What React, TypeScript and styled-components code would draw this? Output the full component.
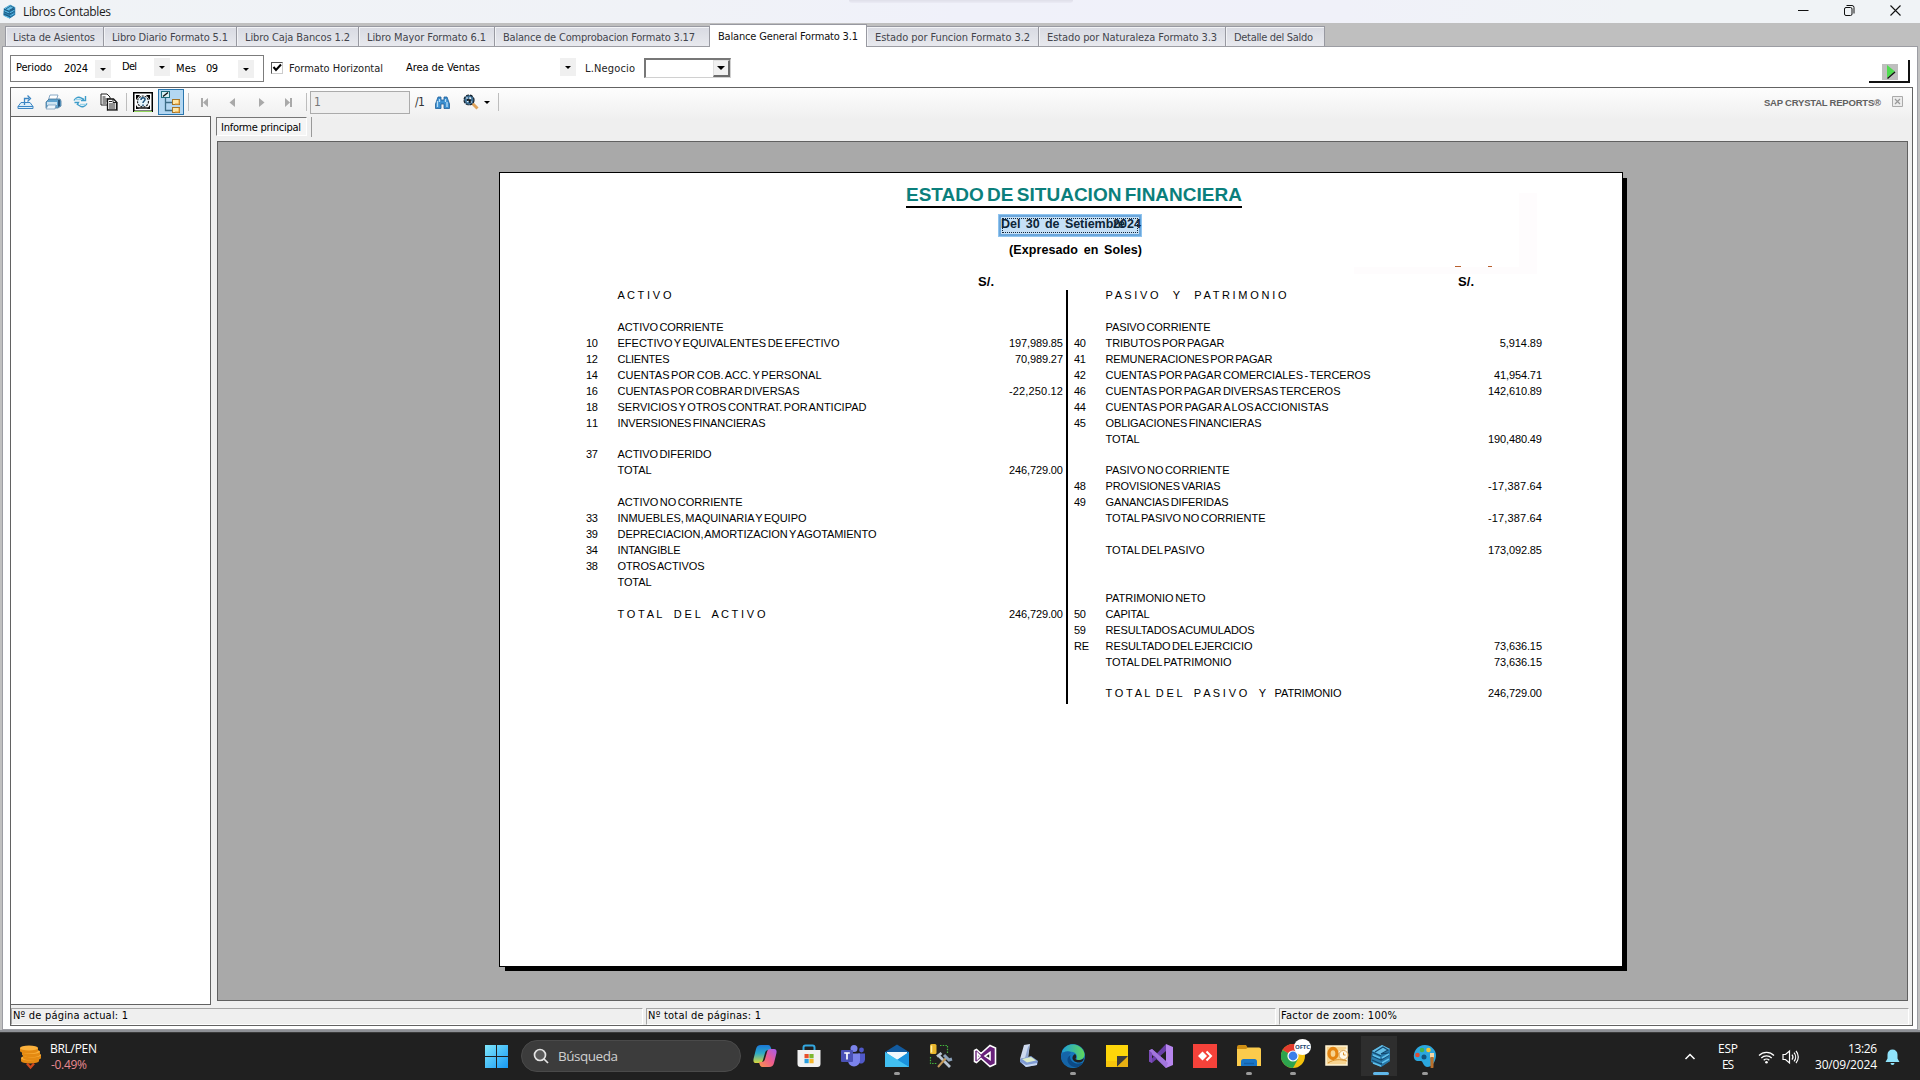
import React, { useLayoutEffect, useRef } from 'react';
import styled, { createGlobalStyle, css } from 'styled-components';

const Global = createGlobalStyle`
  * { box-sizing: border-box; }
  html, body { margin: 0; padding: 0; overflow: hidden; background: #c0c0c0; }
  svg { display: block; flex: none; }
`;

const tahoma = `Tahoma, "DejaVu Sans Condensed", "DejaVu Sans", sans-serif`;
const segoe = `"Segoe UI", "Open Sans", "Noto Sans", sans-serif`;
const arial = `Arial, "Liberation Sans", sans-serif`;

/* ---------- text ---------- */

const TextBox = styled.span<{ $l?: number; $t?: number; $size?: number; $color?: string; $bold?: boolean; $font?: string; $lh?: number; $ws?: number }>`
  display: block;
  flex: none;
  white-space: pre;
  line-height: ${p => p.$lh ?? 16}px;
  margin-left: ${p => p.$l ?? 0}px;
  margin-top: ${p => p.$t ?? 0}px;
  word-spacing: ${p => p.$ws ?? 0}px;
  ${p => p.$size && css`font-size: ${p.$size}px;`}
  ${p => p.$color && css`color: ${p.$color};`}
  ${p => p.$font && css`font-family: ${p.$font};`}
  font-weight: ${p => (p.$bold ? 700 : 400)};
`;
const Run = styled.span`
  display: inline-block;
  white-space: pre;
`;

type TProps = { w?: number; l?: number; t?: number; size?: number; color?: string; bold?: boolean; font?: string; lh?: number; ws?: number; children: string };

/* Tracks a line of text out or in until it is `w` pixels wide. */
function T({ w, l, t, size, color, bold, font, lh, ws, children }: TProps) {
  const box = useRef<HTMLSpanElement>(null);
  const run = useRef<HTMLSpanElement>(null);
  useLayoutEffect(() => {
    if (!w || !box.current || !run.current) return;
    run.current.style.letterSpacing = '0px';
    const natural = run.current.getBoundingClientRect().width;
    run.current.style.letterSpacing = `${(w - natural) / Math.max(1, children.length - 1)}px`;
    box.current.style.width = `${w}px`;
  }, [w, children]);
  return (
    <TextBox ref={box} $l={l} $t={t} $size={size} $color={color} $bold={bold} $font={font} $lh={lh} $ws={ws}>
      <Run ref={run}>{children}</Run>
    </TextBox>
  );
}

/* ---------- window ---------- */

const Screen = styled.div`
  width: 1920px;
  height: 1080px;
  display: flex;
  flex-direction: column;
  background: #c0c0c0;
  color: #000;
  font-family: ${tahoma};
  font-stretch: condensed;
  font-size: 11px;
`;
const TitleBar = styled.header`
  height: 23px;
  flex: none;
  display: flex;
  align-items: flex-start;
  background: linear-gradient(90deg, #f0f3f6 0, #f0f2f7 35%, #f0f1fa 50%, #f0f1f9 70%, #f0f3f6 85%);
  padding-left: 2px;
  font-family: ${segoe};
  font-stretch: normal;
  font-size: 12px;
`;
const AppMark = styled.div`
  width: 15px;
  padding-top: 4px;
`;
const SnapHandle = styled.div`
  width: 224px;
  height: 3px;
  margin-left: 738px;
  border-radius: 0 0 6px 6px;
  background: linear-gradient(#dfdfe9, #ebebf5);
`;
const WindowButtons = styled.div`
  margin-left: auto;
  margin-right: 19px;
  padding-top: 5px;
  display: flex;
  gap: 35px;
`;
const TabStrip = styled.nav`
  height: 23px;
  flex: none;
  display: flex;
  align-items: flex-end;
  padding-left: 5px;
  background: #bfbfbf;
`;
const Tab = styled.div<{ $w: number; $active?: boolean }>`
  width: ${p => p.$w}px;
  height: 20px;
  border: 1px solid #9899a1;
  border-width: 1px 1px 0 0;
  box-shadow: inset 1px 1px 0 #f2f3f6;
  background: linear-gradient(#d8dae2, #e8e9ee);
  color: #44454d;
  display: flex;
  &:first-child { border-left-width: 1px; }
  ${p => p.$active && css`
    height: 23px;
    margin-bottom: -1px;
    background: #fff;
    color: #111;
    box-shadow: none;
    z-index: 1;
  `}
`;
const Body = styled.main`
  height: 984px;
  flex: none;
  margin: 0 2px;
  border: 1px solid #9c9da3;
  background: #fff;
  display: flex;
  flex-direction: column;
`;
const BottomEdge = styled.div`
  height: 2px;
  flex: none;
  background: #8e9095;
`;

/* ---------- filters ---------- */

const FilterRow = styled.div`
  height: 40px;
  flex: none;
  display: flex;
  align-items: flex-start;
`;
const Group = styled.div`
  width: 254px;
  height: 27px;
  margin: 8px 0 0 7px;
  border: 1px solid #7c7c7c;
  display: flex;
`;
const DropButton = styled.div<{ $l: number; $t: number }>`
  width: 16px;
  height: 18px;
  flex: none;
  margin: ${p => p.$t}px 0 0 ${p => p.$l}px;
  background: #f0f0f0;
  display: flex;
  align-items: center;
  justify-content: center;
`;
const Caret = styled.span<{ $s?: number; $l?: number }>`
  width: 0;
  height: 0;
  margin-left: ${p => p.$l ?? 0}px;
  border: ${p => p.$s ?? 3}px solid transparent;
  border-top-color: #000;
  border-bottom: 0;
`;
const CheckBox = styled.div`
  width: 12px;
  height: 12px;
  margin: 15px 0 0 7px;
  border: 1px solid #555;
  border-right-color: #ccc;
  border-bottom-color: #ccc;
  background: #fff;
`;
const Combo = styled.div`
  width: 87px;
  height: 20px;
  margin: 11px 0 0 9px;
  border: 1px solid #d0d0d0;
  border-top: 2px solid #777;
  border-left: 2px solid #777;
  display: flex;
  justify-content: flex-end;
`;
const ComboButton = styled.div`
  width: 17px;
  height: 17px;
  background: #f0f0f0;
  border: 1px solid #e0e0e0;
  border-right: 2px solid #6b6b6b;
  border-bottom: 2px solid #6b6b6b;
  display: flex;
  align-items: center;
  justify-content: center;
`;
const RunButton = styled.div`
  width: 41px;
  height: 23px;
  margin: 13px 7px 0 auto;
  border: 0 solid #111;
  border-width: 0 2px 2px 0;
  padding: 4px 0 0 13px;
`;

/* ---------- report viewer ---------- */

const Viewer = styled.section`
  width: 1903px;
  height: 939px;
  margin-left: 7px;
  flex: none;
  border: 1px solid #626262;
  background: linear-gradient(#fdfdfd, #efefef 32px);
  display: flex;
  flex-direction: column;
`;
const Toolbar = styled.div`
  height: 28px;
  flex: none;
  display: flex;
  align-items: center;
`;
const Slot = styled.div<{ $l: number }>`
  margin-left: ${p => p.$l}px;
  flex: none;
`;
const Sep = styled.i<{ $l: number }>`
  width: 1px;
  height: 18px;
  margin-left: ${p => p.$l}px;
  background: #bdbdbd;
`;
const Pressed = styled.div`
  width: 26px;
  height: 26px;
  margin-left: 5px;
  border: 1px solid #2a76ae;
  background: #b3d7f2;
  padding: 1px 0 0 2px;
`;
const PageField = styled.div`
  width: 100px;
  height: 23px;
  margin-left: 3px;
  border: 1px solid #ababab;
  background: #efefef;
  display: flex;
`;
const Brand = styled.div`
  margin-left: auto;
  margin-right: 9px;
  padding-top: 1px;
  display: flex;
  align-items: flex-start;
`;
const Middle = styled.div`
  height: 889px;
  flex: none;
  display: flex;
`;
const GroupTree = styled.aside`
  width: 200px;
  border: 1px solid #626262;
  border-left-width: 0;
  background: #fff;
`;
const Stage = styled.div`
  flex: 1;
  display: flex;
  flex-direction: column;
  padding: 0 4px 0 5px;
`;
const PageTabs = styled.div`
  height: 25px;
  flex: none;
  display: flex;
  align-items: flex-start;
  padding-top: 1px;
`;
const PageTab = styled.div`
  width: 91px;
  height: 19px;
  border: 1px solid #777;
  border-right-color: #fff;
  border-bottom-color: #fff;
  background: #f5f5f5;
  display: flex;
`;
const TabEdge = styled.i`
  width: 1px;
  height: 20px;
  margin-left: 4px;
  background: #999;
`;
const Canvas = styled.div`
  width: 1691px;
  height: 860px;
  margin-left: 1px;
  border: 1px solid #606060;
  background: #a9a9a9;
  padding: 30px 0 0 281px;
`;
const Page = styled.article`
  position: relative;
  width: 1124px;
  height: 795px;
  border: 1px solid #000;
  box-shadow: 5px 5px 0 -1px #000;
  background: #fff;
  font-family: ${arial};
  font-size: 11px;
`;
const Heading = styled.h1`
  margin: 0 0 0 406px;
  padding-top: 11px;
  width: 336px;
  height: 35px;
  border-bottom: 2px solid #000;
`;
const Period = styled.div`
  width: 144px;
  height: 23px;
  margin: 6px 0 0 498px;
  border: 1px solid #8fc4ef;
  background: #6ba7dc;
  padding: 2px;
  position: relative;
`;
const PeriodInner = styled.div`
  height: 17px;
  background: #c6e0f6;
  outline: 1px dotted #10243a;
  outline-offset: -2px;
  display: flex;
`;
const Year = styled.div`
  position: absolute;
  left: 114px;
  top: 0;
`;
const Units = styled.div`
  height: 25px;
  padding-left: 509px;
`;
const Currency = styled.div`
  height: 25px;
  display: flex;
  align-items: flex-start;
  padding: 12px 0 0 478px;
`;
const LogoRest = styled.div`
  position: absolute;
  left: 854px;
  top: 20px;
  width: 183px;
  height: 81px;
  border: 0 solid #fefcfd;
  border-width: 0 18px 7px 0;
`;
const LogoTick = styled.i<{ $x: number; $w: number }>`
  position: absolute;
  left: ${p => p.$x}px;
  top: 73px;
  width: ${p => p.$w}px;
  height: 1px;
  background: #b8602e;
`;
const Ledger = styled.div`
  display: flex;
  align-items: flex-start;
`;
const Column = styled.div<{ $w: number; $pad: number }>`
  width: ${p => p.$w}px;
  padding-left: ${p => p.$pad}px;
`;
const Divider = styled.div`
  width: 2px;
  height: 414px;
  margin: 3px 0 0 3px;
  background: #000;
`;
const Line = styled.div<{ $h?: number }>`
  height: ${p => p.$h ?? 16}px;
  display: grid;
  grid-template-columns: 31px 1fr auto;
`;
const StatusBar = styled.footer`
  height: 17px;
  margin-top: 3px;
  display: grid;
  grid-template-columns: 632px 630px 630px;
  column-gap: 3px;
`;
const StatusCell = styled.div`
  border: 1px solid #a5a5a5;
  border-right-color: #fff;
  border-bottom-color: #fff;
  display: flex;
  padding-left: 1px;
`;

/* ---------- taskbar ---------- */

const Taskbar = styled.footer`
  height: 48px;
  flex: none;
  background: #202020;
  border-top: 1px solid #3a3a3a;
  display: flex;
  color: #fff;
  font-family: ${segoe};
  font-stretch: normal;
  font-size: 12px;
`;
const Rates = styled.div`
  width: 485px;
  padding: 11px 0 0 19px;
  display: flex;
`;
const Stack = styled.div<{ $align?: string }>`
  display: flex;
  flex-direction: column;
  align-items: ${p => p.$align ?? 'flex-start'};
`;
const StartMark = styled.div`
  width: 24px;
  padding-top: 12px;
`;
const Search = styled.div`
  width: 220px;
  height: 32px;
  margin: 7px 2px 0 12px;
  border-radius: 16px;
  border: 1px solid #4a4a4a;
  background: #3c3c3c;
  display: flex;
  align-items: center;
  padding-left: 11px;
`;
const AppCell = styled.div<{ $active?: boolean }>`
  width: 44px;
  height: 47px;
  padding-top: 11px;
  display: flex;
  flex-direction: column;
  align-items: center;
  ${p => p.$active && css`
    background: linear-gradient(#2e2e2e, #2e2e2e) 2px 3px / 36px 40px no-repeat;
  `}
`;
const Dot = styled.i<{ $active?: boolean }>`
  width: ${p => (p.$active ? 16 : 6)}px;
  height: 3px;
  margin-top: 4px;
  border-radius: 2px;
  background: ${p => (p.$active ? '#60b8ea' : '#9a9a9a')};
`;
const Tray = styled.div`
  margin-left: auto;
  padding: 8px 20px 0 0;
  display: flex;
`;

/* ---------- drawings ---------- */

const Cube = ({ s }: { s: number }) => (
  <svg width={s} height={s} viewBox="0 0 24 24">
    <path d="M3 7 13 1l8 4v12l-9 6-10-5z" fill="#2d7fae" />
    <path d="M3 7 13 1l8 4-9 6z" fill="#63bde6" />
    <path d="m12 11 9-6v12l-9 6z" fill="#2778aa" />
    <path d="M6 8l8-5 5 3-7 4 8-1M3 12l9 4 8-5M3 16l9 4 8-5M3 8l9 4" fill="none" stroke="#14496f" strokeWidth="1.200" />
    <path d="m13 14 7-4M4 11l7 3M4 19l8 3M13 19l7-4" stroke="#5fc2ee" strokeWidth="1.600" />
  </svg>
);

const Coins = () => (
  <svg width="24" height="26" viewBox="0 0 24 26">
    {[[11, 14], [13, 11], [12, 7.6], [10, 4]].map(([x, y]) => (
      <g key={y}>
        <path d={`M${x - 9} ${y}v3a9 2.6 0 0 0 18 0v-3z`} fill="#e48a12" />
        <ellipse cx={x} cy={y} rx="9" ry="2.4" fill="#fbb13c" />
      </g>
    ))}
    <path d="M8 19.5l3.5 4 3.5-4" fill="none" stroke="#d04a1c" strokeWidth="2.4" />
  </svg>
);

const Nav = ({ d }: { d: string }) => (
  <svg width="8" height="11" viewBox="0 0 8 11"><path d={d} fill="#a9a9a9" /></svg>
);

const ExportIcon = () => (
  <svg width="17" height="16" viewBox="0 0 17 16" fill="none" stroke="#3c86c4">
    <path d="M4 8.500h9l3 4H1zM1 12.500h15v2H1z" fill="#dceefa" />
    <path d="M7.500 11V4.500h4.500M10.500 1.500l3 3-3 3" strokeWidth="1.300" />
  </svg>
);
const PrintIcon = () => (
  <svg width="17" height="16" viewBox="0 0 17 16">
    <path d="M5 1h8l-2 6H3z" fill="#fff" stroke="#88a9c6" />
    <path d="M1 8l3-3h11l1 2v5l-3 2H1z" fill="#5fa3cf" stroke="#4a7799" strokeWidth=".8" />
    <path d="M2 8h10v3H2z" fill="#cfe4f2" />
    <path d="M3 11h8l-1 4H1z" fill="#eef6fc" stroke="#6c94b4" strokeWidth=".7" />
    <path d="M13 6h2v6l-2 1z" fill="#27557c" />
  </svg>
);
const RefreshIcon = () => (
  <svg width="15" height="14" viewBox="0 0 15 14" fill="none" stroke="#3d9cc9" strokeWidth="1.400">
    <path d="M1 5.500C3 2 6 1.500 8 3l3 1.500M12.500 1v4.500H8M1.500 7.500h4L4 10M14 8.500c-2 3.500-5 4-7 2.500L4.500 9.500" />
    <path d="M2 4.500h6M7 9.500h6" stroke="#9cd4ea" />
  </svg>
);
const CopyIcon = () => (
  <svg width="18" height="18" viewBox="0 0 18 18">
    <path d="M1 1h6l3 3v8H1z" fill="#fff" stroke="#222" />
    <path d="M2.500 4h3M2.500 6h6M2.500 8h6M2.500 10h4" stroke="#222" />
    <path d="M7.500 6h6l3 3v8h-9z" fill="#fff" stroke="#111" strokeWidth="1.300" />
    <path d="M9 8.500h3M9 11h6M9 13h6M9 15h6M13 6v3.500h3.500" stroke="#222" fill="none" />
    <path d="M17.500 9v8.500H8" stroke="#666" fill="none" />
  </svg>
);
const ParamIcon = () => (
  <svg width="20" height="20" viewBox="0 0 20 20">
    <rect x=".75" y=".75" width="18.500" height="18.500" fill="#fff" stroke="#000" strokeWidth="1.500" />
    <path d="M3 3h4L3 8zM17 3h-4l4 5zM3 17v-4l3 4zM17 17v-4l-3 4z" fill="#000" />
    <circle cx="10" cy="9.500" r="5.500" fill="#e6f4fa" stroke="#222" strokeWidth="1.200" strokeDasharray="2 1" />
    <path d="M8 8c0-3 4-3 4-.500C12 9 10 9 10 11M10 12.500v1.500" fill="none" stroke="#1c4f78" strokeWidth="1.500" />
    <path d="M4 16h12" stroke="#111" strokeWidth="1.500" />
    <path d="M1 19.500h18" stroke="#8fd35a" />
  </svg>
);
const TreeIcon = () => (
  <svg width="20" height="22" viewBox="0 0 20 22">
    <path d="M4.500 6v13.500h7M4.500 11.500h7" fill="none" stroke="#3b6c86" strokeWidth="1.300" />
    <rect x=".5" y=".5" width="8" height="6" fill="#d9f1f4" stroke="#1d6c7c" />
    <path d="M2 5.500 7 1.500" stroke="#111" strokeWidth="1.500" />
    <rect x="11.500" y="8.500" width="7" height="5" fill="#ffe7a6" stroke="#a5762a" />
    <rect x="11.500" y="16.500" width="7" height="5" fill="#ffe7a6" stroke="#a5762a" />
    <path d="M14 13h4v-4M14 21h4v-4" stroke="#e39a34" fill="none" />
  </svg>
);
const Binoculars = () => (
  <svg width="15" height="13" viewBox="0 0 15 13">
    <path d="M3 1h3v3h3V1h3l2.500 7v4.500H9V8H6v4.500H.5V8z" fill="#3b8fd0" stroke="#1e5e98" strokeWidth=".8" />
    <path d="M2.500 5v6M4.500 3v3M10.500 3v3M12 6v5" stroke="#b7def7" strokeWidth="1.300" />
  </svg>
);
const ZoomIcon = () => (
  <svg width="16" height="16" viewBox="0 0 16 16">
    <path d="M9.500 9.500 14.500 14.500" stroke="#e0a45c" strokeWidth="3" />
    <circle cx="6" cy="6" r="5" fill="#3f6f94" stroke="#15202b" strokeWidth="1.200" strokeDasharray="3 1" />
    <path d="M3 4h2M7 3v3M4 8l4-4M7 8h2" stroke="#e8f6ff" strokeWidth="1.100" />
    <path d="M4 6h3v3" stroke="#000" fill="none" strokeWidth="1.300" />
  </svg>
);

const appIcons: Record<string, React.ReactNode> = {
  copilot: (
    <>
      <path d="M8 1h7c2 0 2.500 1.500 3 3l.5 2h-3c-2 0-3 1-3.500 3l-2 7c-.5 2-1.500 3-3.500 3H3c-3 0-3-3-2-6l2-8c.7-2.500 2-4 5-4z" fill="url(#copA)" />
      <path d="M16 23H9.500C7.500 23 7 21.500 6.500 20L6 18h2.500c2 0 3-1 3.500-3l2-7c.5-2 1.500-3 3.500-3H21c3 0 3 3 2 6l-2 8c-.7 2.500-2 4-5 4z" fill="url(#copB)" />
    </>
  ),
  store: (
    <>
      <path d="M6.500 8V3.500a2 2 0 0 1 2-2h7a2 2 0 0 1 2 2V8" fill="none" stroke="#33a7e0" strokeWidth="2" />
      <path d="M.5 6h23v14a3 3 0 0 1-3 3h-17a3 3 0 0 1-3-3z" fill="#f1f1f1" />
      <path d="M7.500 10h4.200v4.200H7.500z" fill="#e8502c" /><path d="M12.400 10h4.200v4.200h-4.200z" fill="#7db72f" />
      <path d="M7.500 15h4.200v4.200H7.500z" fill="#2a9fe0" /><path d="M12.400 15h4.200v4.200h-4.200z" fill="#f5b62a" />
    </>
  ),
  teams: (
    <>
      <circle cx="13" cy="4.500" r="3.500" fill="#7b83eb" /><circle cx="20.500" cy="6" r="2.400" fill="#5059c9" />
      <path d="M17 9.500h7v6a4 4 0 0 1-6 3.500z" fill="#5059c9" />
      <path d="M7 9.500h12v7a6 6 0 0 1-12 0z" fill="#7b83eb" />
      <rect x="0" y="6" width="12" height="12" rx="1" fill="#4a51b5" />
      <path d="M3.200 9h5.600M6 9v6.500" stroke="#fff" strokeWidth="1.700" />
    </>
  ),
  mail: (
    <>
      <path d="M0 8 12 .5 24 8v3H0z" fill="#125a9e" /><path d="M2 8h20v9H2z" fill="#f2f8fc" />
      <path d="M0 8l12 8 12-8v15H0z" fill="#2fb3ee" /><path d="M24 8v15L12 16z" fill="#1a91dd" /><path d="M0 8l24 15H0z" fill="#42c0f2" />
    </>
  ),
  sql: (
    <>
      <rect x="1" y="0" width="6.500" height="10" rx="1.500" fill="#e8b52c" /><path d="M2.500 1.500v7" stroke="#fff0a8" strokeWidth="1.500" />
      <path d="M11 1.500h7.500V9M1.500 13v6.500H8" stroke="#43b63c" strokeDasharray="1.500 1.200" fill="none" strokeWidth="1.200" />
      <path d="m10 12 11 11M8 12.500 12.500 9" stroke="#b9c6d4" strokeWidth="2.800" />
      <path d="m9 23 8-9" stroke="#c49a5c" strokeWidth="2" /><path d="m15 11 5 5 3-1" stroke="#8aa0b8" strokeWidth="3" fill="none" />
    </>
  ),
  vsOld: (
    <path d="M17 1.500 22.500 4v16L17 22.500 8 14.500 3.500 18.500 1.500 17.500v-11l2-1L8 9.500zM17 8.500 12 12l5 3.500zM4.500 9.500v5L7 12z" fill="#68217a" stroke="#fff" strokeWidth="1.600" fillRule="evenodd" />
  ),
  scanner: (
    <>
      <path d="M7 1 13 0 11 14 3 15z" fill="#cdd9ee" /><path d="M11 3 12.500 1 11 13 8 14z" fill="#8fa6d0" />
      <path d="m3 15 11-3 7 5-1 4-11 2-6-5z" fill="#7f9bd4" /><path d="m5 15 9-2 5 3.500-9 2z" fill="#dcebc9" /><path d="m4 18 5 3 11-2v2l-11 2z" fill="#c7d6f0" />
    </>
  ),
  edge: (
    <>
      <circle cx="12" cy="12" r="12" fill="#1678bd" />
      <path d="M1 8C4-2 19-2 23 8c2 6-3 9-8 8 2-2 1-7-3-8C7 7 3 9 1 8z" fill="url(#edgeG)" />
      <path d="M9 10c-4 3-2 12 6 13C7 25 0 20 0 12c1-4 6-6 10-4z" fill="#1565a8" />
      <path d="M9.500 11c-2 5 4 11 12.500 7.500C19 24 13 25 8 20c-3-4-1-8 1.500-9z" fill="#0c4a86" />
      <path d="M14 10c2 2 1 4 .5 5 2 2 7 1 8.500-1-1 5-5 5-8 4-4-1-5-6-1-8z" fill="#202020" />
    </>
  ),
  sticky: (
    <>
      <path d="M1 1h22v11l-2 1-7 9H1z" fill="#fdd60a" /><path d="M1 17h12v6H1z" fill="#f8c60c" />
      <path d="M12 12h11L12 23z" fill="#3b3b3b" /><path d="M23 12v11H12z" fill="#e8b012" />
    </>
  ),
  vsNew: (
    <>
      <path d="m17 0 7 3v18l-7 3z" fill="#b785ee" /><path d="M0 6.500 3 5l14 12v7L2 10z" fill="#8b5cc9" />
      <path d="M0 17.500 17 0v7L3 19z" fill="#6a3fa8" /><path d="m0 6.500 17 17.500 2-5L3 5z" fill="#a276dd" />
      <path d="M0 6.500v11l3 1.500V9z" fill="#7c4cba" />
    </>
  ),
  anydesk: (
    <>
      <path d="M0 0h24v24H0z" fill="#f5423a" /><path d="m9.500 7.500 4.500 4.500-4.500 4.500L5 12z" fill="#fff" />
      <path d="m13.500 7.500 4.500 4.500-4.500 4.500" fill="none" stroke="#fff" strokeWidth="2" />
    </>
  ),
  folder: (
    <>
      <path d="M0 3a2 2 0 0 1 2-2h7l2 3h11v6H0z" fill="#cf8f14" /><path d="M0 5h9l2-1.500h11a2 2 0 0 1 2 2V22H0z" fill="#fbcb4c" />
      <path d="M4 22v-4.500A2.500 2.500 0 0 1 6.500 15h11a2.500 2.500 0 0 1 2.500 2.500V22z" fill="#1a76c6" /><path d="M7 19.500h10" stroke="#1560a8" strokeWidth="1.500" />
    </>
  ),
  chrome: (
    <>
      <circle cx="12" cy="12" r="12" fill="#f4c20d" />
      <path d="M12 12 1.600 6A12 12 0 0 1 22.400 6z" fill="#e33b2e" /><path d="M12 12 1.600 6A12 12 0 0 0 12 24l5-9z" fill="#2da44e" />
      <circle cx="12" cy="12" r="5.600" fill="#fff" /><circle cx="12" cy="12" r="4.400" fill="#3b7fe8" />
    </>
  ),
  outlook: (
    <>
      <path d="M1 2h21v19H1z" fill="#f7d491" stroke="#fff3d5" strokeWidth="1.500" />
      <path d="m12 8 10-3v11z" fill="#fff8e8" /><ellipse cx="8" cy="9.500" rx="4" ry="5" fill="none" stroke="#e38411" strokeWidth="3.300" />
      <circle cx="18.500" cy="11" r="4.500" fill="#fff7e7" stroke="#dda451" /><path d="M18.500 8.500V11h2M3 19c6-4 12-4 19-2" stroke="#d8912d" fill="none" />
    </>
  ),
  paint: (
    <>
      <path d="M12 1C4 1 0 8 1 14c1 4 5 3 7 3s2 5 6 6c6 0 9-7 9-12S18 1 12 1z" fill="#2ba7df" />
      <circle cx="9" cy="6" r="2.300" fill="#47b54a" /><circle cx="15.500" cy="6" r="2.300" fill="#f4c534" /><circle cx="4.500" cy="11" r="2.300" fill="#e04c32" /><circle cx="11" cy="13" r="2.500" fill="#10537f" />
      <path d="M17 9h4v5h-4z" fill="#f1d6a8" /><path d="M17.300 13h3.400L20.500 23a1.300 1.300 0 0 1-3 0z" fill="#b96f2c" />
    </>
  ),
};

const ChromeWrap = styled.div`
  position: relative;
`;
const Profile = styled.div`
  position: absolute;
  left: 13px;
  top: -5px;
  width: 17px;
  height: 16px;
  border-radius: 50%;
  background: #fff;
  color: #17456e;
  overflow: hidden;
  display: flex;
  justify-content: center;
`;

const apps: [string, boolean][] = [
  ['copilot', false], ['store', false], ['teams', false], ['mail', true], ['sql', false], ['vsOld', false], ['scanner', false],
  ['edge', true], ['sticky', false], ['vsNew', false], ['anydesk', false], ['folder', true], ['chrome', true], ['outlook', false],
];

const AppIcon = ({ name }: { name: string }) => (
  <svg width="24" height="24" viewBox="0 0 24 24">
    <defs>
      <linearGradient id="copA" x1="0" y1="0" x2="0" y2="1"><stop offset="0" stopColor="#1b77d8" /><stop offset=".45" stopColor="#2aa9c8" /><stop offset="1" stopColor="#d8d73a" /></linearGradient>
      <linearGradient id="copB" x1="1" y1="0" x2="0" y2="1"><stop offset="0" stopColor="#a45df0" /><stop offset=".5" stopColor="#ee5c8c" /><stop offset="1" stopColor="#f9964a" /></linearGradient>
      <linearGradient id="edgeG"><stop offset="0" stopColor="#1f9fd8" /><stop offset="1" stopColor="#5fd85a" /></linearGradient>
    </defs>
    {appIcons[name]}
  </svg>
);

/* ---------- data ---------- */

type Tabs = { text: string; w: number; pad: number; tw: number; active?: boolean };
const tabs: Tabs[] = [
  { text: 'Lista de Asientos', w: 99, pad: 7, tw: 82 },
  { text: 'Libro Diario Formato 5.1', w: 133, pad: 8, tw: 116 },
  { text: 'Libro Caja Bancos 1.2', w: 122, pad: 8, tw: 105 },
  { text: 'Libro Mayor Formato 6.1', w: 136, pad: 8, tw: 119 },
  { text: 'Balance de Comprobacion Formato 3.17', w: 215, pad: 8, tw: 192 },
  { text: 'Balance General Formato 3.1', w: 157, pad: 8, tw: 140, active: true },
  { text: 'Estado por Funcion Formato 3.2', w: 172, pad: 8, tw: 155 },
  { text: 'Estado por Naturaleza Formato 3.3', w: 187, pad: 8, tw: 170 },
  { text: 'Detalle del Saldo', w: 99, pad: 8, tw: 79 },
];

type Row = { code?: string; label?: string; w?: number; amount?: string; h?: number; spaced?: boolean };
const activo: Row[] = [
  { label: 'A C T I V O', w: 54, spaced: true },
  {},
  { label: 'ACTIVO CORRIENTE', w: 106 },
  { code: '10', label: 'EFECTIVO Y EQUIVALENTES DE EFECTIVO', w: 222, amount: '197,989.85' },
  { code: '12', label: 'CLIENTES', w: 52, amount: '70,989.27' },
  { code: '14', label: 'CUENTAS POR COB. ACC. Y PERSONAL', w: 204 },
  { code: '16', label: 'CUENTAS POR COBRAR DIVERSAS', w: 182, amount: '-22,250.12' },
  { code: '18', label: 'SERVICIOS Y OTROS CONTRAT. POR ANTICIPAD', w: 249 },
  { code: '11', label: 'INVERSIONES FINANCIERAS', w: 148 },
  { h: 15 },
  { code: '37', label: 'ACTIVO DIFERIDO', w: 94 },
  { label: 'TOTAL', w: 34, amount: '246,729.00' },
  {},
  { label: 'ACTIVO NO CORRIENTE', w: 125 },
  { code: '33', label: 'INMUEBLES, MAQUINARIA Y EQUIPO', w: 189 },
  { code: '39', label: 'DEPRECIACION, AMORTIZACION Y AGOTAMIENTO', w: 259 },
  { code: '34', label: 'INTANGIBLE', w: 63 },
  { code: '38', label: 'OTROS ACTIVOS', w: 87 },
  { label: 'TOTAL', w: 34 },
  {},
  { label: 'T O T A L    D E L    A C T I V O', w: 148, amount: '246,729.00', spaced: true },
];
const pasivo: Row[] = [
  { label: 'P A S I V O     Y     P A T R I M O N I O', w: 181, spaced: true },
  {},
  { label: 'PASIVO CORRIENTE', w: 105 },
  { code: '40', label: 'TRIBUTOS POR PAGAR', w: 119, amount: '5,914.89' },
  { code: '41', label: 'REMUNERACIONES POR PAGAR', w: 167 },
  { code: '42', label: 'CUENTAS POR PAGAR COMERCIALES - TERCEROS', w: 265, amount: '41,954.71' },
  { code: '46', label: 'CUENTAS POR PAGAR DIVERSAS TERCEROS', w: 235, amount: '142,610.89' },
  { code: '44', label: 'CUENTAS POR PAGAR A LOS ACCIONISTAS', w: 223 },
  { code: '45', label: 'OBLIGACIONES FINANCIERAS', w: 156 },
  { label: 'TOTAL', w: 34, amount: '190,480.49' },
  { h: 15 },
  { label: 'PASIVO NO CORRIENTE', w: 124 },
  { code: '48', label: 'PROVISIONES VARIAS', w: 115, amount: '-17,387.64' },
  { code: '49', label: 'GANANCIAS DIFERIDAS', w: 123 },
  { label: 'TOTAL PASIVO NO CORRIENTE', w: 160, amount: '-17,387.64' },
  {},
  { label: 'TOTAL DEL PASIVO', w: 99, amount: '173,092.85' },
  {},
  {},
  { label: 'PATRIMONIO NETO', w: 100 },
  { code: '50', label: 'CAPITAL', w: 44 },
  { code: '59', label: 'RESULTADOS ACUMULADOS', w: 149 },
  { code: 'RE', label: 'RESULTADO DEL EJERCICIO', w: 147, amount: '73,636.15' },
  { label: 'TOTAL DEL PATRIMONIO', w: 126, amount: '73,636.15' },
  { h: 15 },
  { label: 'T O T A L  D E L    P A S I V O    Y   PATRIMONIO', w: 236, amount: '246,729.00', spaced: true },
];

const Rows = ({ rows }: { rows: Row[] }) => (
  <>
    {rows.map((r, i) => (
      <Line key={i} $h={r.h}>
        <T w={r.code === 'RE' ? 15 : r.code ? 12 : undefined}>{r.code ?? ''}</T>
        <T w={r.w} l={0.5} ws={r.spaced ? 0 : -1.5}>{r.label ?? ''}</T>
        <T w={r.amount ? r.amount.length * 5.9 - 5 : undefined}>{r.amount ?? ''}</T>
      </Line>
    ))}
  </>
);

/* ---------- app ---------- */

export default function App() {
  return (
    <Screen>
      <Global />
      <TitleBar>
        <AppMark><Cube s={15} /></AppMark>
        <T l={6} t={4} w={88} size={12} color="#1b1b1b">Libros Contables</T>
        <SnapHandle />
        <WindowButtons>
          <svg width="11" height="11" viewBox="0 0 11 11"><path d="M0 5.500h10.500" stroke="#111" /></svg>
          <svg width="11" height="11" viewBox="0 0 11 11" fill="none" stroke="#111"><rect x=".5" y="2.500" width="7.500" height="8" rx="1.500" /><path d="M2.500.5h5.500a2 2 0 0 1 2 2v6" /></svg>
          <svg width="11" height="11" viewBox="0 0 11 11"><path d="M.5.500l10 10M10.500.500l-10 10" stroke="#111" strokeWidth="1.100" /></svg>
        </WindowButtons>
      </TitleBar>

      <TabStrip>
        {tabs.map(t => (
          <Tab key={t.text} $w={t.w} $active={t.active}>
            <T l={t.pad} t={t.active ? 4 : 3} w={t.tw}>{t.text}</T>
          </Tab>
        ))}
      </TabStrip>

      <Body>
        <FilterRow>
          <Group>
            <T l={5} t={4} w={36}>Periodo</T>
            <T l={12} t={5} w={24}>2024</T>
            <DropButton $l={7} $t={4}><Caret /></DropButton>
            <T l={11} t={3} w={15}>Del</T>
            <DropButton $l={17} $t={2}><Caret /></DropButton>
            <T l={6} t={5} w={20}>Mes</T>
            <T l={10} t={5} w={12}>09</T>
            <DropButton $l={20} $t={4}><Caret /></DropButton>
          </Group>
          <CheckBox>
            <svg width="10" height="10" viewBox="0 0 10 10"><path d="M1.500 4 4 7l5-5.500" fill="none" stroke="#000" strokeWidth="2" /></svg>
          </CheckBox>
          <T l={6} t={14} w={94} color="#222">Formato Horizontal</T>
          <T l={23} t={13} w={74}>Area de Ventas</T>
          <DropButton $l={80} $t={11}><Caret /></DropButton>
          <T l={9} t={14} w={50} color="#222">L.Negocio</T>
          <Combo><ComboButton><Caret $s={4} /></ComboButton></Combo>
          <RunButton>
            <svg width="16" height="16" viewBox="0 0 16 16">
              <path d="M0 0h16v16H0z" fill="#bfbfbf" />
              <path d="M5 1v13l8-6.500z" fill="#4fdc4f" />
              <path d="M5.500 14.500 13 8" stroke="#111" strokeWidth="1.300" />
            </svg>
          </RunButton>
        </FilterRow>

        <Viewer>
          <Toolbar>
            <Slot $l={6}><ExportIcon /></Slot>
            <Slot $l={11}><PrintIcon /></Slot>
            <Slot $l={11}><RefreshIcon /></Slot>
            <Slot $l={12}><CopyIcon /></Slot>
            <Sep $l={8} />
            <Slot $l={6}><ParamIcon /></Slot>
            <Pressed><TreeIcon /></Pressed>
            <Sep $l={4} />
            <Slot $l={12}><Nav d="M0 1h2v9H0zM7 1v9L2 5.500z" /></Slot>
            <Slot $l={19}><Nav d="M7 1v9L1.500 5.500z" /></Slot>
            <Slot $l={22}><Nav d="M1 1v9l5.500-4.500z" /></Slot>
            <Slot $l={19}><Nav d="M0 1v9l5-4.500zM5 1h2v9H5z" /></Slot>
            <Sep $l={13} />
            <PageField><T l={3} t={2} w={6} size={12} color="#777">1</T></PageField>
            <T l={5} w={10} size={12} color="#333">/1</T>
            <Slot $l={10}><Binoculars /></Slot>
            <Slot $l={13}><ZoomIcon /></Slot>
            <Caret $l={5} />
            <Sep $l={8} />
            <Brand>
              <T t={1} w={117} size={9.5} bold font={arial} color="#606060" lh={12}>SAP CRYSTAL REPORTS®</T>
              <Slot $l={11}>
                <svg width="11" height="11" viewBox="0 0 11 11"><path d="M.5.500h10v10H.5z" fill="#ececec" stroke="#aaa" /><path d="m3 3 5 5M8 3 3 8" stroke="#999" strokeWidth="1.200" /></svg>
              </Slot>
            </Brand>
          </Toolbar>

          <Middle>
            <GroupTree />
            <Stage>
              <PageTabs>
                <PageTab><T l={4} t={2} w={80}>Informe principal</T></PageTab>
                <TabEdge />
              </PageTabs>
              <Canvas>
                <Page>
                  <Heading><T w={336} size={19} bold color="#0b7f7c" lh={22} ws={-2}>ESTADO DE SITUACION FINANCIERA</T></Heading>
                  <Period>
                    <PeriodInner><T t={-1} w={124} size={12.5} bold color="#0d2437" lh={17} ws={2}>Del 30 de Setiembre</T></PeriodInner>
                    <Year><T t={1} w={28} size={12.5} bold color="#0d2437" lh={17}>2024</T></Year>
                  </Period>
                  <Units><T w={133} size={12.5} bold lh={26} ws={2}>(Expresado en Soles)</T></Units>
                  <Currency>
                    <T w={16} size={13} bold lh={15}>S/.</T>
                    <T l={464} w={16} size={13} bold lh={15}>S/.</T>
                  </Currency>
                  <LogoRest>
                    <LogoTick $x={101} $w={6} />
                    <LogoTick $x={134} $w={4} />
                  </LogoRest>
                  <Ledger>
                    <Column $w={563} $pad={86}><Rows rows={activo} /></Column>
                    <Divider />
                    <Column $w={474} $pad={6}><Rows rows={pasivo} /></Column>
                  </Ledger>
                </Page>
              </Canvas>
            </Stage>
          </Middle>

          <StatusBar>
            <StatusCell><T t={-1} w={115}>Nº de página actual: 1</T></StatusCell>
            <StatusCell><T t={-1} w={113}>Nº total de páginas: 1</T></StatusCell>
            <StatusCell><T t={-1} w={116}>Factor de zoom: 100%</T></StatusCell>
          </StatusBar>
        </Viewer>
      </Body>
      <BottomEdge />

      <Taskbar>
        <Rates>
          <Coins />
          <Stack>
            <T l={7} t={-3} w={47}>BRL/PEN</T>
            <T l={8} w={36} color="#e98a92">-0.49%</T>
          </Stack>
        </Rates>
        <StartMark>
          <svg width="24" height="24" viewBox="0 0 24 24">
            <defs><linearGradient id="win" gradientUnits="userSpaceOnUse" x1="0" y1="0" x2="24" y2="24"><stop stopColor="#7fe6fb" /><stop offset="1" stopColor="#1296f5" /></linearGradient></defs>
            <path d="M0 0h11v11H0zM12 0h11v11H12zM0 12h11v11H0zM12 12h11v11H12z" fill="url(#win)" />
          </svg>
        </StartMark>
        <Search>
          <svg width="16" height="16" viewBox="0 0 16 16" fill="none" stroke="#e4e4e4" strokeWidth="1.700"><circle cx="7" cy="7" r="5.500" fill="#5a5a5a" /><path d="m11 11 4 4" /></svg>
          <T l={9} t={-1} w={60} size={13.5} color="#cfcfcf" lh={20}>Búsqueda</T>
        </Search>
        {apps.map(([name, open]) => (
          <AppCell key={name}>
            {name === 'chrome' ? (
              <ChromeWrap>
                <AppIcon name={name} />
                <Profile><T size={6} bold w={15}>OFTC</T></Profile>
              </ChromeWrap>
            ) : <AppIcon name={name} />}
            {open && <Dot />}
          </AppCell>
        ))}
        <AppCell $active><Cube s={24} /><Dot $active /></AppCell>
        <AppCell><AppIcon name="paint" /><Dot /></AppCell>

        <Tray>
          <svg width="12" height="32" viewBox="0 0 12 32"><path d="m1.500 18 4.500-4.500 4.500 4.500" fill="none" stroke="#fff" strokeWidth="1.500" /></svg>
          <Slot $l={22}>
            <Stack $align="center">
              <T w={20}>ESP</T>
              <T w={12}>ES</T>
            </Stack>
          </Slot>
          <Slot $l={20}>
            <svg width="17" height="32" viewBox="0 0 17 32" fill="none" stroke="#fff" strokeWidth="1.300">
              <path d="M1 14.500a10.500 10.500 0 0 1 15 0M3.300 17a7.300 7.300 0 0 1 10.400 0M5.700 19.300a4 4 0 0 1 5.600 0" />
              <circle cx="8.500" cy="21.300" r="1.300" fill="#fff" stroke="none" />
            </svg>
          </Slot>
          <Slot $l={7}>
            <svg width="17" height="32" viewBox="0 0 17 32" fill="none" stroke="#fff" strokeWidth="1.200">
              <path d="M1 13.500h2.500L7.500 10v12L3.500 18.500H1zM10 13.500a4 4 0 0 1 0 5M12 11.700a6.500 6.500 0 0 1 0 8.600M14 10a9 9 0 0 1 0 12" />
            </svg>
          </Slot>
          <Slot $l={16}>
            <Stack $align="flex-end">
              <T w={29}>13:26</T>
              <T w={62}>30/09/2024</T>
            </Stack>
          </Slot>
          <Slot $l={8}>
            <svg width="15" height="32" viewBox="0 0 15 32"><path d="M7.500 8.500a5 5 0 0 1 5 5v4l2 3.500H.5l2-3.500v-4a5 5 0 0 1 5-5zM5.500 22h4a2 2 0 0 1-4 0z" fill="#8fe3fb" /></svg>
          </Slot>
        </Tray>
      </Taskbar>
    </Screen>
  );
}
